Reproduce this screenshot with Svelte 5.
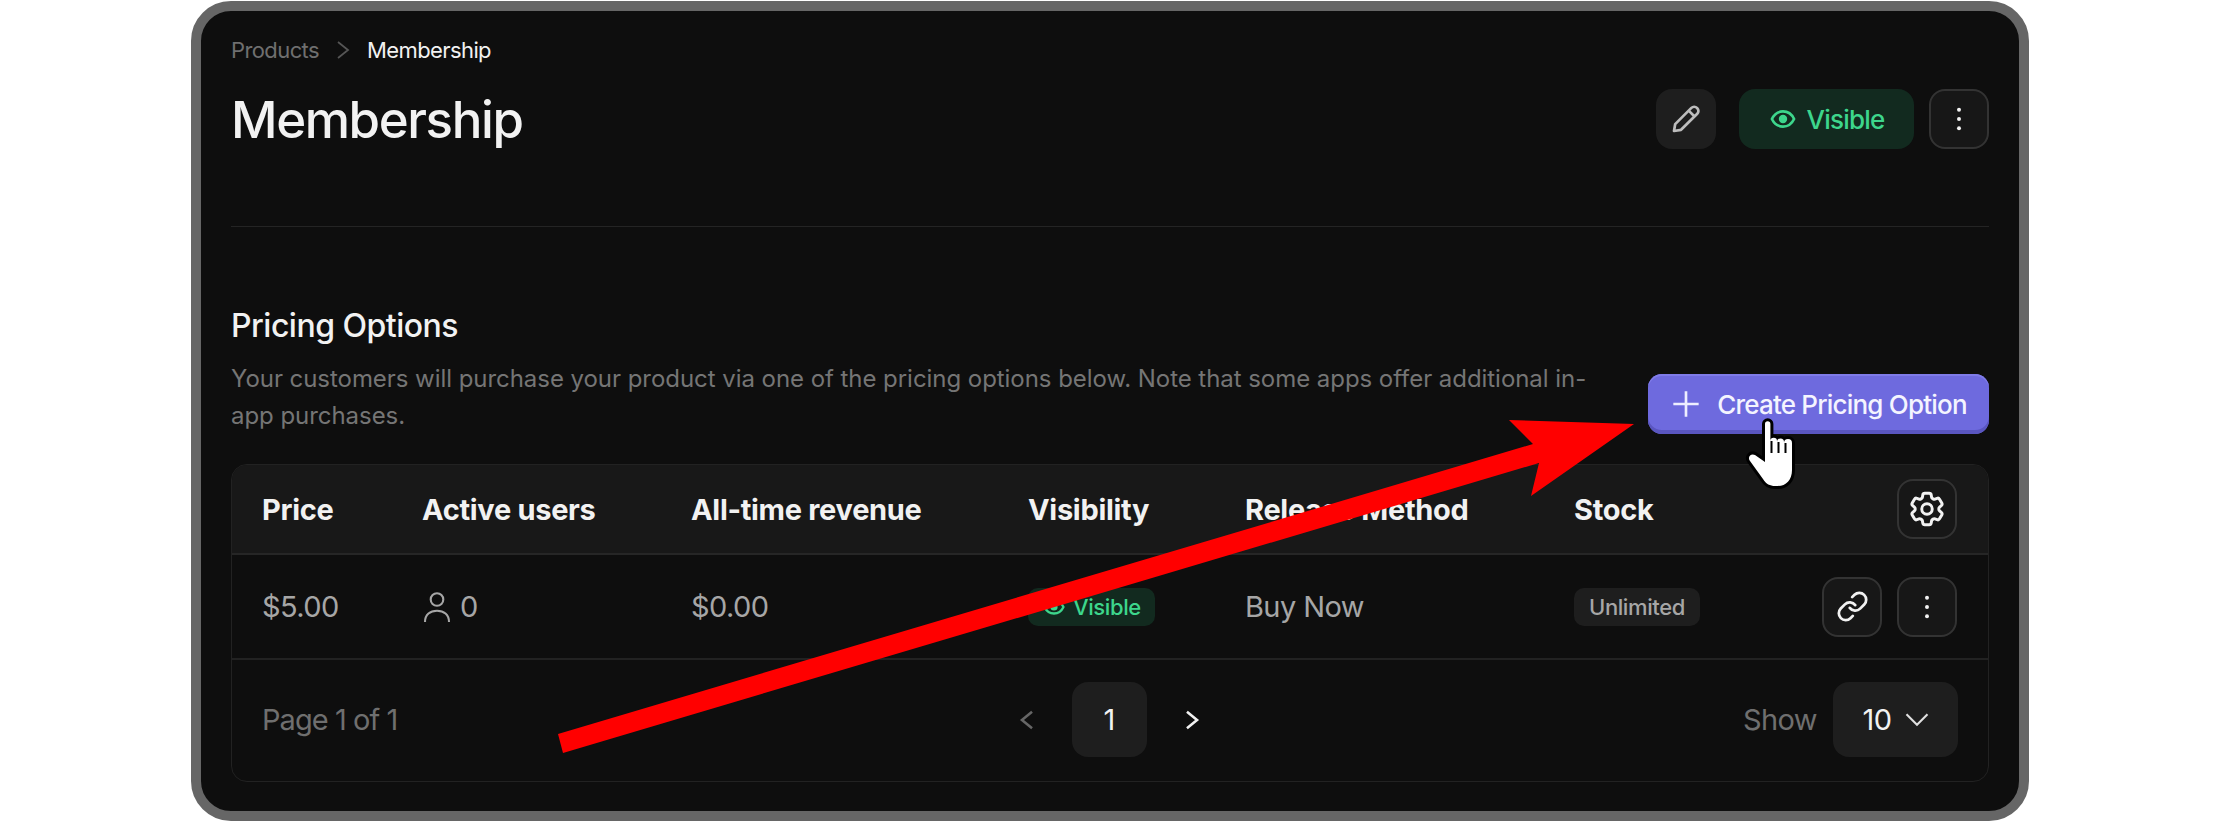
<script>
	const columns = ["Price", "Active users", "All-time revenue", "Visibility", "Release Method", "Stock"];
	const eye = "M2.5 12C4.5 7.800 8 5.500 12 5.500s7.500 2.300 9.500 6.500c-2 4.200-5.500 6.500-9.500 6.500s-7.500-2.300-9.500-6.500z";
	const gear = "M9.594 3.940c.09-.542.56-.94 1.110-.94h2.593c.55 0 1.020.398 1.110.94l.213 1.281c.063.374.313.686.645.87.074.04.147.083.22.127.325.196.72.257 1.075.124l1.217-.456a1.125 1.125 0 0 1 1.370.49l1.296 2.247a1.125 1.125 0 0 1-.26 1.431l-1.003.827c-.293.241-.438.613-.43.992a7.723 7.723 0 0 1 0 .255c-.008.378.137.75.43.991l1.004.827c.424.35.534.955.26 1.430l-1.298 2.247a1.125 1.125 0 0 1-1.369.491l-1.217-.456c-.355-.133-.75-.072-1.076.124a6.470 6.470 0 0 1-.22.128c-.331.183-.581.495-.644.869l-.213 1.281c-.09.543-.56.94-1.110.94h-2.594c-.55 0-1.019-.398-1.110-.94l-.213-1.281c-.062-.374-.312-.686-.644-.87a6.520 6.520 0 0 1-.22-.127c-.325-.196-.72-.257-1.076-.124l-1.217.456a1.125 1.125 0 0 1-1.369-.49l-1.297-2.247a1.125 1.125 0 0 1 .26-1.431l1.004-.827c.292-.24.437-.613.43-.991a6.932 6.932 0 0 1 0-.255c.007-.38-.138-.751-.43-.992l-1.004-.827a1.125 1.125 0 0 1-.26-1.430l1.297-2.247a1.125 1.125 0 0 1 1.370-.491l1.216.456c.356.133.751.072 1.076-.124.072-.044.146-.086.22-.128.332-.183.582-.495.644-.869l.214-1.280z";
	const link = "M10 13a5 5 0 0 0 7.540.54l3-3a5 5 0 0 0-7.070-7.070l-1.720 1.710M14 11a5 5 0 0 0-7.540-.54l-3 3a5 5 0 0 0 7.070 7.070l1.710-1.710";
</script>

{#snippet dots()}
	<svg viewBox="0 0 24 24" class="ico"><circle cx="12" cy="4" r="1.700" class="dot" /><circle cx="12" cy="12" r="1.700" class="dot" /><circle cx="12" cy="20" r="1.700" class="dot" /></svg>
{/snippet}

<div class="frame">
	<header class="page-head">
		<nav class="crumbs">
			<span class="crumb-parent">Products</span>
			<svg class="crumb-sep" viewBox="0 0 24 24"><path d="M7 4l10 8-10 8" /></svg>
			<span class="crumb-current">Membership</span>
		</nav>
		<div class="title-row">
			<h1>Membership</h1>
			<div class="actions">
				<button class="icon-btn filled" aria-label="Edit">
					<svg viewBox="0 0 24 24" class="ico pencil"><path d="M4 20l.8-4.600L15.600 4.600a2.600 2.600 0 0 1 3.700 0l.2.2a2.600 2.600 0 0 1 0 3.700L8.700 19.200 4 20zM13.800 6.400l3.900 3.900" /></svg>
				</button>
				<button class="visible-btn">
					<svg viewBox="0 0 24 24" class="ico eye"><path d={eye} /><circle cx="12" cy="12" r="3.600" class="dot" /></svg>
					Visible
				</button>
				<button class="icon-btn outlined" aria-label="More">{@render dots()}</button>
			</div>
		</div>
	</header>

	<section class="pricing">
		<div class="pricing-head">
			<div class="pricing-copy">
				<h2>Pricing Options</h2>
				<p>Your customers will purchase your product via one of the pricing options below. Note that some apps offer additional in-app purchases.</p>
			</div>
			<button class="create-btn">
				<svg viewBox="0 0 24 24" class="plus"><path d="M12 2.500v19M2.500 12h19" /></svg>
				Create Pricing Option
			</button>
		</div>

		<div class="table">
			<div class="row head-row">
				{#each columns as col}
					<div class="cell">{col}</div>
				{/each}
				<div class="cell tools">
					<button class="icon-btn outlined small" aria-label="Settings">
						<svg viewBox="0 0 24 24" class="ico gear"><path d={gear} /><circle cx="12" cy="12" r="3" /></svg>
					</button>
				</div>
			</div>
			<div class="row body-row">
				<div class="cell">$5.00</div>
				<div class="cell users">
					<svg viewBox="0 0 24 24" class="user"><circle cx="12" cy="7" r="4.200" /><path d="M4 22c0-5 3.500-7.500 8-7.500s8 2.500 8 7.500" /></svg>
					0
				</div>
				<div class="cell">$0.00</div>
				<div class="cell">
					<span class="pill">
						<svg viewBox="0 0 24 24" class="ico eye small-eye"><path d={eye} /><circle cx="12" cy="12" r="3.600" class="dot" /></svg>
						Visible
					</span>
				</div>
				<div class="cell">Buy Now</div>
				<div class="cell"><span class="badge">Unlimited</span></div>
				<div class="cell tools">
					<button class="icon-btn outlined small" aria-label="Copy link">
						<svg viewBox="0 0 24 24" class="ico link"><path d={link} /></svg>
					</button>
					<button class="icon-btn outlined small" aria-label="More">{@render dots()}</button>
				</div>
			</div>
			<div class="pager">
				<span class="page-label page-count">Page 1 of 1</span>
				<div class="pages">
					<svg viewBox="0 0 24 24" class="chev prev"><path d="M17.500 3L6.500 12l11 9" /></svg>
					<span class="page-current">1</span>
					<svg viewBox="0 0 24 24" class="chev next"><path d="M6.500 3l11 9-11 9" /></svg>
				</div>
				<div class="show">
					<span class="page-label">Show</span>
					<span class="select">10
						<svg viewBox="0 0 24 24" class="chev-down"><path d="M3 7l9 9 9-9" /></svg>
					</span>
				</div>
			</div>
		</div>
	</section>

	<svg class="overlay" viewBox="0 0 2222 822" aria-hidden="true">
		<polygon class="arrow" points="558,734 1533,444 1509,420 1634,424 1531,496 1539,463 563,753" />
		<path class="hand" d="M1765 424a2.700 2.700 0 0 1 5.400 0V441a3.300 3.300 0 0 1 6.600 0v1a3.500 3.500 0 0 1 7 0v1a4 4 0 0 1 8 0V470c0 10-6 16-14 16h-3c-5 0-9-2-12-7l-13-18c-3-4 1-8 5-6l10 7z" />
		<path class="hand-lines" d="M1771.500 441v12M1778.500 442v11M1785.500 443v10" />
	</svg>
</div>

<style>
	:global(body) {
		background: #fff;
	}
	.frame {
		position: relative;
		box-sizing: border-box;
		width: 1838px;
		height: 820px;
		margin: 1px 0 0 191px;
		padding: 0 30px;
		border: 10px solid #666;
		border-radius: 40px;
		background: #0e0e0e;
		color: #f2f2f2;
		font-family: Inter, "Liberation Sans", sans-serif;
		overflow: hidden;
	}
	button {
		font: inherit;
		border: 0;
		padding: 0;
	}
	.page-head {
		height: 215px;
		border-bottom: 1px solid #242424;
	}
	.crumbs {
		display: flex;
		align-items: center;
		gap: 12px;
		height: 24px;
		padding-top: 27px;
		font-size: 22px;
		letter-spacing: -0.6px;
	}
	.crumb-parent {
		color: #6f6f6f;
	}
	.crumb-current {
		color: #f2f2f2;
	}
	.crumb-sep {
		width: 24px;
		height: 24px;
		fill: none;
		stroke: #555;
		stroke-width: 1.800;
	}
	.title-row {
		display: flex;
		justify-content: space-between;
		align-items: center;
		margin-top: 27px;
		height: 60px;
	}
	h1 {
		margin: 0;
		font-size: 51px;
		font-weight: 500;
		letter-spacing: -1.4px;
	}
	.actions {
		display: flex;
		gap: 23px;
	}
	.actions .outlined {
		margin-left: -8px;
	}
	.icon-btn {
		display: flex;
		align-items: center;
		justify-content: center;
		box-sizing: border-box;
		width: 60px;
		height: 60px;
		border-radius: 16px;
		color: #f2f2f2;
	}
	.filled {
		background: #1e1e1e;
	}
	.outlined {
		background: #171717;
		border: 2px solid #333;
	}
	.ico {
		width: 28px;
		height: 28px;
		fill: none;
		stroke: currentColor;
		stroke-width: 2;
		stroke-linejoin: round;
		stroke-linecap: round;
	}
	.ico .dot {
		fill: currentColor;
		stroke: none;
	}
	.pencil {
		color: #bdbdbd;
		width: 36px;
		height: 36px;
		stroke-width: 1.800;
	}
	.gear {
		width: 42px;
		height: 42px;
		stroke-width: 1.700;
	}
	.link {
		width: 33px;
		height: 33px;
	}
	.eye {
		stroke-width: 2.300;
	}
	.visible-btn {
		display: flex;
		align-items: center;
		justify-content: center;
		gap: 10px;
		width: 175px;
		height: 60px;
		border-radius: 16px;
		background: #122a1f;
		color: #3dd68c;
		font-size: 26px;
		font-weight: 500;
		letter-spacing: -0.8px;
	}
	.pricing-head {
		display: flex;
		justify-content: space-between;
		align-items: flex-end;
		height: 237px;
		padding-bottom: 30px;
		box-sizing: border-box;
	}
	.pricing-copy {
		width: 1360px;
	}
	h2 {
		margin: 0 0 14px;
		font-size: 32px;
		line-height: 40px;
		font-weight: 500;
		letter-spacing: -0.5px;
	}
	p {
		margin: 0;
		color: #757575;
		font-size: 24px;
		line-height: 37px;
		letter-spacing: -0.05px;
	}
	.create-btn {
		display: flex;
		align-items: center;
		justify-content: center;
		gap: 15px;
		width: 341px;
		height: 60px;
		border-radius: 14px;
		background: #6e6ade;
		box-shadow: inset 0 -4px 0 #5a56c0, inset 0 2px 0 #7f7be8;
		color: #f4f4ff;
		font-size: 26px;
		font-weight: 500;
		letter-spacing: -0.8px;
	}
	.plus {
		width: 32px;
		height: 32px;
		fill: none;
		stroke: #eeeeff;
		stroke-width: 2;
	}
	.table {
		box-sizing: border-box;
		height: 318px;
		border: 1px solid #222;
		border-radius: 16px;
		overflow: hidden;
	}
	.row {
		display: grid;
		grid-template-columns: 160px 269px 337px 217px 329px 1fr auto;
		align-items: center;
		padding: 0 31px 0 30px;
	}
	.head-row {
		height: 88px;
		background: #181818;
		border-bottom: 2px solid #262626;
		font-size: 29px;
		font-weight: 700;
		letter-spacing: -0.3px;
	}
	.body-row {
		height: 103px;
		border-bottom: 2px solid #222;
		color: #a6a6a6;
		font-size: 29px;
		letter-spacing: -0.6px;
	}
	.tools {
		display: flex;
		gap: 15px;
	}
	.users {
		display: flex;
		align-items: center;
		gap: 5px;
	}
	.user {
		width: 36px;
		height: 36px;
		margin-left: -3px;
		fill: none;
		stroke: #a6a6a6;
		stroke-width: 1.400;
	}
	.pill {
		display: inline-flex;
		align-items: center;
		gap: 7px;
		height: 38px;
		padding: 0 14px;
		border-radius: 10px;
		background: #122a1f;
		color: #3dd68c;
		font-size: 22px;
		font-weight: 500;
		letter-spacing: -0.4px;
	}
	.small-eye {
		width: 24px;
		height: 24px;
	}
	.badge {
		display: inline-flex;
		align-items: center;
		height: 38px;
		padding: 0 15px;
		border-radius: 10px;
		background: #1e1e1e;
		color: #a6a6a6;
		font-size: 22px;
		font-weight: 500;
		letter-spacing: -0.4px;
	}
	.pager {
		display: grid;
		grid-template-columns: 1fr auto 1fr;
		align-items: center;
		height: 119px;
		padding: 0 31px 0 30px;
	}
	.page-label {
		color: #6f6f6f;
		font-size: 29px;
		letter-spacing: -0.6px;
	}
	.page-count {
		letter-spacing: -0.95px;
	}
	.pages {
		display: flex;
		align-items: center;
		gap: 34px;
	}
	.page-current {
		display: flex;
		align-items: center;
		justify-content: center;
		width: 75px;
		height: 75px;
		border-radius: 16px;
		background: #1e1e1e;
		font-size: 29px;
	}
	.chev {
		width: 22px;
		height: 22px;
		fill: none;
		stroke-width: 2.800;
	}
	.prev {
		stroke: #666;
	}
	.next {
		stroke: #f2f2f2;
	}
	.show {
		display: flex;
		align-items: center;
		justify-content: flex-end;
		gap: 16px;
	}
	.select {
		display: flex;
		align-items: center;
		justify-content: center;
		box-sizing: border-box;
		gap: 12px;
		width: 125px;
		height: 75px;
		margin-right: -1px;
		padding-left: 3px;
		border-radius: 16px;
		background: #1e1e1e;
		font-size: 29px;
		letter-spacing: -0.6px;
	}
	.chev-down {
		width: 28px;
		height: 28px;
		fill: none;
		stroke: #e0e0e0;
		stroke-width: 1.800;
	}
	.overlay {
		position: absolute;
		left: -201px;
		top: -11px;
		width: 2222px;
		height: 822px;
		pointer-events: none;
	}
	.arrow {
		fill: #ff0000;
	}
	.hand {
		fill: #fff;
		stroke: #000;
		stroke-width: 6;
		stroke-linejoin: round;
		paint-order: stroke;
	}
	.hand-lines {
		fill: none;
		stroke: #000;
		stroke-width: 2;
	}
</style>
